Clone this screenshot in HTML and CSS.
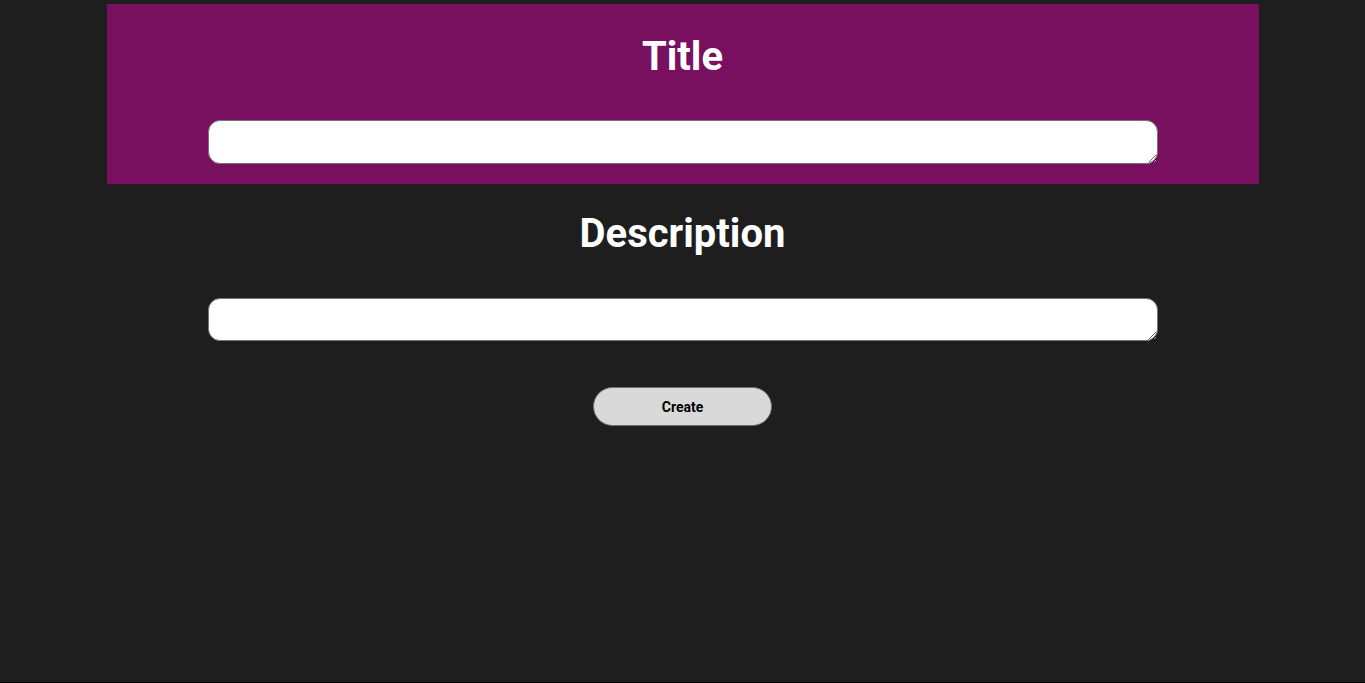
FILE: index.html
```html
<!DOCTYPE html>
<html lang="en">
<head>
<meta charset="utf-8">
<title>Create</title>
<link rel="stylesheet" href="styles.css">
</head>
<body>
<main class="page">
  <section class="field field-title">
    <h1 class="field-label">Title</h1>
    <textarea class="field-input"></textarea>
  </section>
  <section class="field field-desc">
    <h1 class="field-label">Description</h1>
    <textarea class="field-input"></textarea>
  </section>
  <div class="actions">
    <button class="create-btn" type="button">Create</button>
  </div>
</main>
</body>
</html>
```
FILE: styles.css
```css
html {
  background: #000;
}
body {
  margin: 0;
  padding-top: 4px;
  box-sizing: border-box;
  min-height: 682px;
  background: #1e1e1e;
  font-family: Roboto, "Liberation Sans", Arial, sans-serif;
  color: #fff;
}
.page {
  width: 1152px;
  margin: 0 auto;
}
.field {
  display: flex;
  flex-direction: column;
  align-items: center;
  padding: 26px 0 20px;
}
.field-title {
  background: #780f5f;
  padding-top: 29px;
}
.field-desc {
  padding-top: 26px;
}
.field-label {
  margin: 0;
  font-size: 40px;
  line-height: 47px;
  font-weight: 700;
}
.field-input {
  display: block;
  box-sizing: border-box;
  width: 950px;
  height: 44px;
  margin-top: 40px;
  border: 1px solid #767676;
  border-radius: 12px;
  background: #fff;
  resize: vertical;
  font-family: inherit;
}
.field-desc .field-input {
  margin-top: 41px;
  height: 43px;
}
.actions {
  display: flex;
  justify-content: center;
  padding-top: 26px;
}
.create-btn {
  box-sizing: border-box;
  width: 179px;
  height: 39px;
  border: 1px solid #6e6e6e;
  border-radius: 20px;
  background: #d9d9d9;
  color: #000;
  font-family: Roboto, "Liberation Sans", Arial, sans-serif;
  font-size: 14px;
  font-weight: 700;
  cursor: pointer;
}
```
